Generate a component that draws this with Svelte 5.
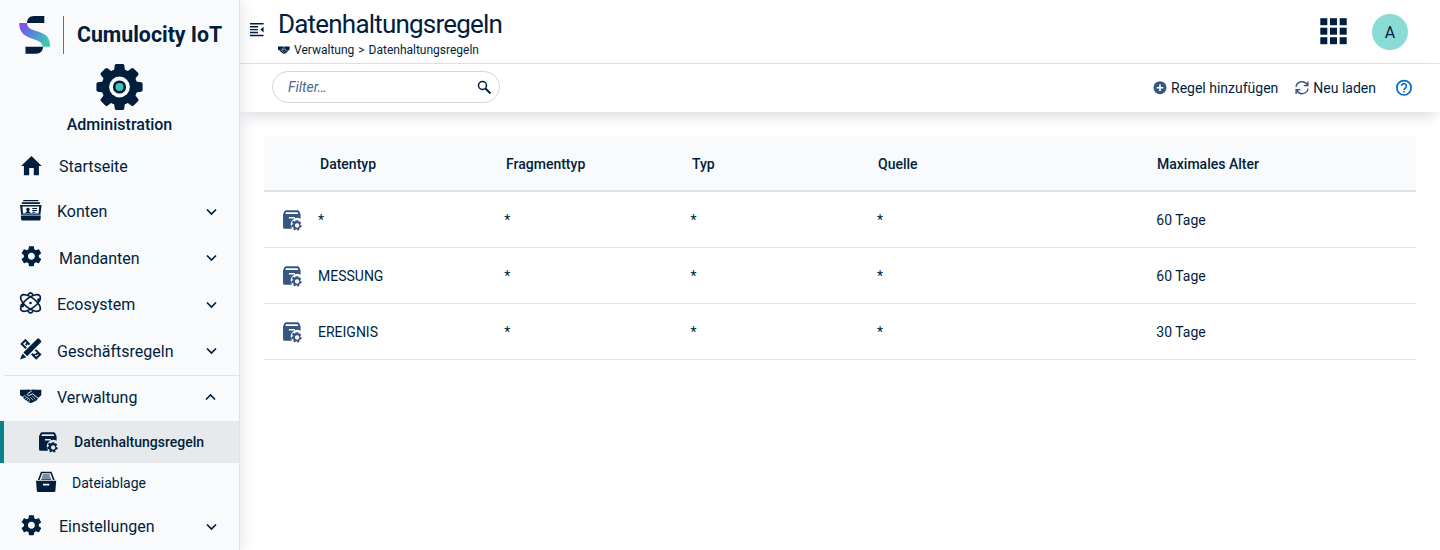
<script>
  const nav = [
    { label: 'Startseite', icon: 'home', h: 45, x: 20, up: 1 },
    { label: 'Konten', icon: 'card', h: 45, chevron: 'down', up: 1.5 },
    { label: 'Mandanten', icon: 'gear', h: 48, chevron: 'down', x: 20, up: 2 },
    { label: 'Ecosystem', icon: 'atom', h: 45, chevron: 'down', up: 1.5 },
    { label: 'Geschäftsregeln', icon: 'design', h: 48, chevron: 'down', up: 2 },
    { label: 'Verwaltung', icon: 'hands', h: 46, chevron: 'up', line: true, up: 1 },
    { label: 'Datenhaltungsregeln', icon: 'archive', h: 42, sub: true, active: true, up: 0 },
    { label: 'Dateiablage', icon: 'tray', h: 40, sub: true, up: 1 },
    { label: 'Einstellungen', icon: 'gear', h: 47, chevron: 'down', x: 20, up: 2 }
  ];
  const columns = ['Datentyp', 'Fragmenttyp', 'Typ', 'Quelle', 'Maximales Alter'];
  const rows = [
    ['*', '*', '*', '*', '60 Tage'],
    ['MESSUNG', '*', '*', '*', '60 Tage'],
    ['EREIGNIS', '*', '*', '*', '30 Tage']
  ];
  const teeth = [0, 45, 90, 135, 180, 225, 270, 315];
  const gearPath =
    'M19.43 12.98c.04-.32.07-.64.07-.98s-.03-.66-.07-.98l2.11-1.65c.19-.15.24-.42.12-.64l-2-3.46c-.12-.22-.39-.3-.61-.22l-2.49 1c-.52-.4-1.08-.73-1.69-.98l-.38-2.65C14.46 2.18 14.25 2 14 2h-4c-.25 0-.46.18-.49.42l-.38 2.65c-.61.25-1.17.59-1.69.98l-2.49-1c-.23-.09-.49 0-.61.22l-2 3.46c-.13.22-.07.49.12.64l2.11 1.65c-.04.32-.07.65-.07.98s.03.66.07.98l-2.11 1.65c-.19.15-.24.42-.12.64l2 3.46c.12.22.39.3.61.22l2.49-1c.52.4 1.08.73 1.69.98l.38 2.65c.03.24.24.42.49.42h4c.25 0 .46-.18.49-.42l.38-2.65c.61-.25 1.17-.59 1.69-.98l2.49 1c.23.09.49 0 .61-.22l2-3.46c.12-.22.07-.49-.12-.64l-2.11-1.65zM12 15.5c-1.93 0-3.5-1.57-3.5-3.5s1.57-3.5 3.5-3.5 3.5 1.57 3.5 3.5-1.57 3.5-3.5 3.5z';
</script>

{#snippet icon(name, size = 22)}
  <svg class="icon" width={size} height={size} viewBox="0 0 22 22" fill="currentColor">
    {#if name === 'home'}
      <path d="M11.500 .9 1.100 11H3.900v9.300H9.200V13h4.600v7.300h5.100V11h2.800z" />
    {:else if name === 'card'}
      <path d="M3.200.9h15.200v1.300H3.200zM1.800 3.200h18v1.700h-18z" />
      <path fill-rule="evenodd" d="M0 6h21.600l-1.200 9.800H1.200zM2.400 7.600l.6 7h15.600l.6-7z" />
      <path d="M.8 16.600h20l-.3 4q-.1.900-1 .9H2.100q-.9 0-1-.9z" />
      <path d="M8 8.700a1.700 1.700 0 0 1 1.100 3v1l1.300.6v.9H5.500v-.9l1.300-.6v-1A1.700 1.700 0 0 1 8 8.700zM12.300 9h4.700v1h-4.700zM12.300 10.900h4.700v1h-4.700zM12.300 12.800h3v1h-3z" />
    {:else if name === 'gear'}
      <path d={gearPath} transform="translate(-.6 -.8) scale(1)" />
    {:else if name === 'atom'}
      <g fill="none" stroke="currentColor" stroke-width="1.600">
        <ellipse cx="10.500" cy="11" rx="11.800" ry="5.300" transform="rotate(38 10.500 11)" />
        <ellipse cx="10.500" cy="11" rx="11.800" ry="5.300" transform="rotate(-38 10.500 11)" />
        <path d="M7.800 3.600C8.500 1.800 9.500.9 10.500.9s2 .9 2.700 2.700M7.800 18.400c.7 1.800 1.700 2.700 2.700 2.700s2-.9 2.700-2.700" />
      </g>
      <circle cx="10.500" cy="11" r="1.300" />
      <circle cx="2.300" cy="13.500" r="1.900" />
      <circle cx="18.800" cy="8" r="1.700" />
    {:else if name === 'design'}
      <path d="M17.100.9a1.500 1.500 0 0 1 2.200 0l1.500 1.500a1.500 1.500 0 0 1 0 2.200L7.200 18.300 3.400 14.500z" />
      <path d="M2.500 15.400 6.300 19.200 0 21.500z" />
      <g fill="none" stroke="currentColor" stroke-width="2">
        <path d="M9.600 6.600 5.400 2.200 1.700 5.900 6.100 10.300M7.800 4.900 5.700 7" />
        <path d="M15.500 11.900 20.100 16.500 16.200 20.300 11.700 15.800M18 14.500l-2.200 2.200M13.700 17.600l1.400-1.300" />
      </g>
    {:else if name === 'hands'}
      <path d="M0 4.800h5.500l3.200-.4 2 .5 2.200-.5 3.200.4H21.300v5.400l-2.700 2.200-1.500 2.400q-.5 1.200-1.700.9-.4 1.300-1.700 1.100-.6 1-1.800.7-1 .9-2.200.2L5 14.800l-2.300-3L0 10.200z" />
      <g fill="none" stroke="#f8fafc">
        <path d="M11.700 6 8 8.400c-1.600 1.300-.3 2.700 1.400 2l3.200-1.600 5.400 4.400" stroke-width="1" />
        <path d="M12.300 11.200l3.100 2.900M10.500 12.400l2.900 2.900M2.600 12.400l2.200-1.800 2 1.800 1.700.9 1.500 1.300M4.500 14.300l1.900-1.700M6.400 15.700l2-1.800M8.400 17l1.900-1.800" stroke-width=".7" />
      </g>
    {:else if name === 'archive'}
      <path fill-rule="evenodd" d="M1 5.200 2.600 2q.4-.7 1.300-.7h11.900q.9 0 1.300.7l1.500 3.200v4.500a6.500 6.500 0 0 0-8.900 8.800l.3 1.200H2.500Q1 19.700 1 18.200zM4 3.200 3.300 5h13l-.8-1.800zM6.900 7.900v1.600h5.900V7.900z" />
      <path fill-rule="evenodd" d="M14.600 10.900h1.800l.4 1.500 1.400-.5 1.100 1.700-1.100 1.100.2 1 1.500.7-.5 1.800-1.500.1-.6.9.3 1.500-1.800.5-.9-1.200h-.9l-1 1.100-1.600-.8.4-1.500-.6-.9-1.500-.2-.4-1.800 1.500-.7.2-1-1-1.200 1.200-1.500 1.400.6.800-.500zM15.200 14a2.200 2.200 0 1 0 .01 0z" transform="translate(-.1 .3)" />
    {:else if name === 'tray'}
      <path fill-rule="evenodd" d="M5 .8h10.500l3.200 8.200h-1.800L14.400 2.300H6.100L3.600 9H1.800z" />
      <path d="M6.700 3.500h7v1h-7zM6.100 5.500h8.200v1H6.100zM5.400 7.500h9.700v1.200H5.400z" />
      <path fill-rule="evenodd" d="M0 9.800h20.200l-.8 10q-.1 1.200-1.200 1.200H2q-1.100 0-1.200-1.200zM7 12.700v1.900h6.300v-1.900z" />
    {/if}
  </svg>
{/snippet}

<div class="app">
  <aside>
    <div class="brand">
      <svg width="32" height="40" viewBox="0 0 32 40">
        <defs>
          <linearGradient id="swoosh" x1="0" y1="0" x2="1" y2=".6">
            <stop offset="0" stop-color="#9040f8" />
            <stop offset=".45" stop-color="#5b7fd8" />
            <stop offset="1" stop-color="#3fc6b0" />
          </linearGradient>
        </defs>
        <path d="M25.300 1v7H8C8 4 10.500 1 15 1zM6.500 31.700h17.500c0 4-2.500 7-7 7H6.500z" fill="#011e3d" />
        <path d="M.3 8H8c.3 4 2.500 6 7.500 7.400C25.500 18.500 31 20 31 31.700H23.700c-.4-4-3-5.500-8.200-7.200C5.500 21.500.3 18 .3 8z" fill="url(#swoosh)" />
      </svg>
      <span class="rule"></span>
      <span class="product">Cumulocity IoT</span>
    </div>
    <div class="module">
      <svg width="48" height="48" viewBox="-24.500 -24 48 48">
        <g fill="#011e3d">
          <circle r="18" />
          {#each teeth as a}
            <path transform="rotate({a})" d="M-5.500-16-4.700-21.700q.2-1.400 1.600-1.400h6.200q1.400 0 1.600 1.400L5.500-16z" />
          {/each}
        </g>
        <circle r="10.400" fill="#f8fafc" />
        <circle r="6.600" fill="#011e3d" />
        <circle r="4" fill="#3fc3b5" />
      </svg>
      <strong>Administration</strong>
    </div>
    <nav>
      {#each nav as item}
        <div class="item" class:sub={item.sub} class:active={item.active} class:line={item.line} class:wide={item.x} style="height:{item.h}px">
          <span class="glyph" style="padding-bottom:{item.up * 2}px">{@render icon(item.icon)}</span>
          <span class="label">{item.label}</span>
          {#if item.chevron}
            <svg class="chev {item.chevron}" width="12" height="8" viewBox="0 0 12 8" fill="none" stroke="#011e3d" stroke-width="1.700">
              <path d={item.chevron === 'down' ? 'M2 1.500 6.500 6l4.500-4.500' : 'M2 6.500 6.500 2l4.500 4.500'} />
            </svg>
          {/if}
        </div>
      {/each}
    </nav>
  </aside>

  <main>
    <header>
      <svg class="toggle" width="14" height="14" viewBox="0 0 14 14" fill="#011e3d">
        <path d="M0 0h13.600v1.500H0zM0 3h8v1.400H0zM0 5.900h8v1.400H0zM0 8.800h8v1.400H0zM0 11.700h13.600v1.500H0zM13.600 3.800v5.600L10.400 6.600z" />
      </svg>
      <div class="heading">
        <h1>Datenhaltungsregeln</h1>
        <div class="crumbs">{@render icon('hands', 12)}<span>Verwaltung</span><span>&gt;</span><span>Datenhaltungsregeln</span></div>
      </div>
      <svg class="apps" width="27" height="27" viewBox="0 0 27 27" fill="#011e3d">
        {#each [0, 1, 2] as r}{#each [0, 1, 2] as c}
          <rect x={c * 9.700 + 0.300} y={r * 9.500 + 0.200} width="7" height="7" />
        {/each}{/each}
      </svg>
      <div class="avatar">A</div>
    </header>
    <div class="actions">
      <div class="search">
        <span>Filter…</span>
        <svg width="14" height="14" viewBox="0 0 14 14" fill="none" stroke="#011e3d">
          <circle cx="5.500" cy="5.500" r="4" stroke-width="1.500" />
          <path d="M8.500 8.500l5 5" stroke-width="2" />
        </svg>
      </div>
      <div class="buttons">
        <span class="btn add">
          <svg width="14" height="14" viewBox="0 0 14 14"><circle cx="7" cy="6.700" r="6.500" fill="#36587f" /><path d="M7 3.400v6.600M3.700 6.700h6.600" stroke="#fff" stroke-width="1.600" /></svg>
          Regel hinzufügen
        </span>
        <span class="btn reload">
          <svg width="14" height="14" viewBox="0 0 14 14" fill="none" stroke="#36587f" stroke-width="1.400">
            <path d="M1 5.900A6 6 0 0 1 12.300 4M13 7.500A6 6 0 0 1 1.700 9.400M12.900.5v4.100H8.800M1.100 12.900V8.800h4.100" />
          </svg>
          Neu laden
        </span>
        <svg class="help" width="16" height="16" viewBox="0 0 16 16" fill="none" stroke="#0a6bcb">
          <circle cx="8" cy="7.800" r="7.200" stroke-width="1.700" />
          <path d="M5.600 6.100a2.400 2.400 0 1 1 3.800 1.900C8.400 8.700 8 9.100 8 10" stroke-width="1.600" />
          <path d="M8 11v1.600" stroke-width="1.700" />
        </svg>
      </div>
    </div>
    <section class="table">
      <div class="row head">
        <span></span>
        {#each columns as c}<span>{c}</span>{/each}
      </div>
      {#each rows as r}
        <div class="row">
          <span class="rowicon">{@render icon('archive')}</span>
          {#each r as cell}<span>{cell}</span>{/each}
        </div>
      {/each}
    </section>
  </main>
</div>

<style>
  :global(body) { background: #fff; }
  .app {
    display: flex;
    width: 1440px;
    height: 550px;
    overflow: hidden;
    font-family: Roboto, sans-serif;
    font-size: 14px;
    color: #011e3d;
  }
  svg { display: block; flex: none; overflow: visible; }
  aside {
    position: relative;
    z-index: 2;
    box-sizing: border-box;
    width: 240px;
    flex: none;
    background: #f8fafc;
    border-right: 1px solid #dfe2e7;
    box-shadow: 0 0 16px rgba(1, 30, 61, .14);
  }
  .brand { display: flex; height: 38px; padding: 15px 0 0 19px; }
  .rule { width: 1px; height: 38px; margin: 1px 13px 0 12px; background: #587390; }
  .product { font-size: 21.300px; font-weight: 700; line-height: 38px; white-space: nowrap; padding-top: 1px; }
  .module { display: flex; flex-direction: column; align-items: center; padding-top: 10px; height: 81px; }
  .module svg { margin-right: 1px; }
  .module strong { font-size: 16px; font-weight: 500; line-height: 20px; margin-top: 4px; }
  .item { display: flex; box-sizing: border-box; align-items: center; padding-left: 20px; font-size: 16px; }
  .glyph { width: 22px; margin-right: 15px; }
  .wide .glyph { margin-right: 17px; }
  .label { flex: 1; white-space: nowrap; }
  .chev { margin-right: 22px; }
  .chev.up { margin-right: 23px; }
  .line { border-top: 1px solid #dfe2e7; margin-left: 4px; padding-left: 16px; }
  .item.line { padding-bottom: 3px; }
  .sub { padding-left: 36px; font-size: 14px; }
  .sub .glyph { margin-right: 14px; }
  .active { background: #e6eaed; border-left: 4px solid #08828a; padding-left: 34px; font-weight: 500; }
  main { flex: 1; min-width: 0; }
  header { display: flex; box-sizing: border-box; height: 64px; border-bottom: 1px solid #dfe2e7; padding-right: 32px; }
  .toggle { margin: 23px 14px 0 10px; }
  .heading { flex: 1; }
  h1 { margin: 8px 0 0; font-size: 26px; font-weight: 400; line-height: 32px; letter-spacing: -.8px; }
  .crumbs { display: flex; align-items: center; gap: 4px; font-size: 12px; line-height: 16px; margin-top: 2px; }
  .apps { margin: 18px 25px 0 0; }
  .avatar { width: 36px; height: 36px; margin-top: 14px; border-radius: 50%; background: #8adbd5; text-align: center; font-size: 16px; line-height: 37px; }
  .actions { position: relative; z-index: 1; display: flex; align-items: center; justify-content: space-between; box-sizing: border-box; height: 48px; padding: 0 28px 2px 32px; background: #fff; box-shadow: 0 7px 16px -5px rgba(1, 30, 61, .2); }
  .search { display: flex; align-items: center; justify-content: space-between; box-sizing: border-box; width: 228px; height: 32px; padding: 0 8px 0 15px; border: 1px solid #cfd7df; border-radius: 16px; }
  .search span { color: #4d6c8e; font-style: italic; }
  .buttons { display: flex; align-items: center; padding-top: 2px; }
  .btn { display: flex; align-items: center; gap: 4px; }
  .add { margin-right: 17px; }
  .help { margin-left: 20px; }
  .table { margin: 24px 24px 0; }
  .row { display: grid; grid-template-columns: 54px 186.300px 186.300px 186.300px 279.400px 1fr; align-items: center; box-sizing: border-box; height: 56px; border-bottom: 1px solid #dfe2e7; }
  .head { grid-template-columns: 54px 186px 186px 186px 279px 1fr; background: #f8fafc; border-bottom-width: 2px; font-weight: 500; padding: 2px 0 0 2px; }
  .rowicon { padding: 1px 0 0 18px; color: #36587f; }
</style>
